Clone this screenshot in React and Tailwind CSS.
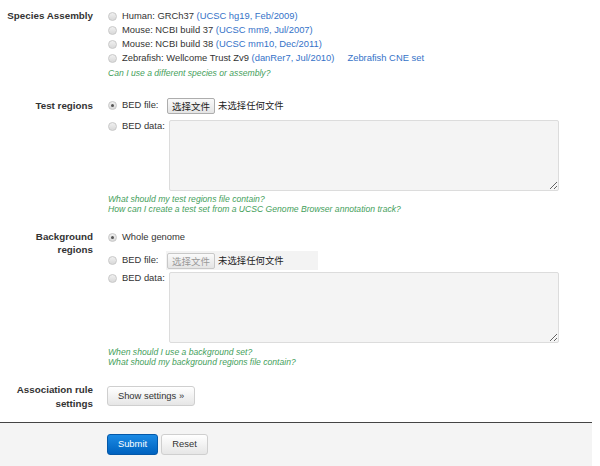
import React from 'react';

const Radio = ({ checked }) => (
  <span className="w-[9px] h-[9px] rounded-full border border-[#c8c8c8] bg-linear-to-b from-[#f0f0f0] to-[#d9d9d9] flex items-center justify-center shrink-0">
    {checked && <span className="w-[3px] h-[3px] rounded-full bg-[#555]" />}
  </span>
);

const Label = ({ children }) => (
  <div className="w-[93px] shrink-0 text-right font-bold text-[9.8px] text-[#333]">{children}</div>
);

const Link = ({ children }) => <span className="text-[#3572c8]">{children}</span>;

const Help = ({ children }) => (
  <div className="italic text-[8.6px] leading-[10px] text-[#45a05b]">{children}</div>
);

const FileInput = ({ disabled }) => (
  <div className={'flex items-center h-[19px] ' + (disabled ? 'bg-[#f3f3f3] w-[152px]' : '')}>
    <button
      type="button"
      className={
        'h-[16px] w-[48px] ml-[1px] border rounded-[2px] bg-linear-to-b from-[#fafafa] to-[#e4e4e4] text-[9.5px] leading-[14px] font-["Noto_Sans_CJK_SC",sans-serif] ' +
        (disabled ? 'border-[#c8c8c8] text-[#999]' : 'border-[#adadad] text-[#222]')
      }
    >
      选择文件
    </button>
    <span className="ml-[3px] text-[9.4px] text-[#222] font-['Noto_Sans_CJK_SC',sans-serif]">未选择任何文件</span>
  </div>
);

const BedData = () => (
  <div className="flex items-start">
    <div className="flex items-center gap-[5px] h-[13px]">
      <Radio />
      <span>BED data:</span>
    </div>
    <textarea className="ml-[4px] w-[390px] h-[71px] bg-[#f4f4f4] border border-[#dcdcdc] rounded-[2px] outline-none" />
  </div>
);

export default function App() {
  return (
    <div className="w-[600px] h-[466px] bg-white overflow-hidden font-['Liberation_Sans',Arial,sans-serif] text-[9.4px] text-[#333]">
      {/* species */}
      <div className="flex pt-[9px]">
        <Label>
          <div className="leading-[14px]">Species Assembly</div>
        </Label>
        <div className="ml-[15px] flex flex-col">
          <div className="h-[14px] flex items-center gap-[5px]">
            <Radio />
            <span>Human: GRCh37 <Link>(UCSC hg19, Feb/2009)</Link></span>
          </div>
          <div className="h-[14px] flex items-center gap-[5px]">
            <Radio />
            <span>Mouse: NCBI build 37 <Link>(UCSC mm9, Jul/2007)</Link></span>
          </div>
          <div className="h-[14px] flex items-center gap-[5px]">
            <Radio />
            <span>Mouse: NCBI build 38 <Link>(UCSC mm10, Dec/2011)</Link></span>
          </div>
          <div className="h-[14px] flex items-center gap-[5px]">
            <Radio />
            <span>Zebrafish: Wellcome Trust Zv9 <Link>(danRer7, Jul/2010)</Link></span>
            <span className="ml-[8px]"><Link>Zebrafish CNE set</Link></span>
          </div>
          <div className="mt-[3px]">
            <Help>Can I use a different species or assembly?</Help>
          </div>
        </div>
      </div>

      {/* test regions */}
      <div className="flex mt-[18px]">
        <Label>
          <div className="leading-[19px]">Test regions</div>
        </Label>
        <div className="ml-[15px] flex flex-col">
          <div className="flex items-center h-[19px]">
            <div className="flex items-center gap-[5px] w-[58px]">
              <Radio checked />
              <span>BED file:</span>
            </div>
            <FileInput />
          </div>
          <div className="mt-[5px]">
            <BedData />
          </div>
          <div className="mt-[3px]">
            <Help>What should my test regions file contain?</Help>
            <Help>How can I create a test set from a UCSC Genome Browser annotation track?</Help>
          </div>
        </div>
      </div>

      {/* background regions */}
      <div className="flex mt-[16px]">
        <Label>
          <div className="leading-[13px]">Background</div>
          <div className="leading-[13px]">regions</div>
        </Label>
        <div className="ml-[15px] flex flex-col">
          <div className="h-[14px] flex items-center gap-[5px]">
            <Radio checked />
            <span>Whole genome</span>
          </div>
          <div className="flex items-center h-[19px] mt-[7px]">
            <div className="flex items-center gap-[5px] w-[58px]">
              <Radio />
              <span>BED file:</span>
            </div>
            <FileInput disabled />
          </div>
          <div className="mt-[2px]">
            <BedData />
          </div>
          <div className="mt-[4px]">
            <Help>When should I use a background set?</Help>
            <Help>What should my background regions file contain?</Help>
          </div>
        </div>
      </div>

      {/* association rules */}
      <div className="flex mt-[16px]">
        <Label>
          <div className="leading-[14px]">Association rule</div>
          <div className="leading-[14px]">settings</div>
        </Label>
        <div className="ml-[14px] pt-[3px]">
          <button
            type="button"
            className="h-[20px] w-[88px] border border-[#cfcfcf] rounded-[3px] bg-linear-to-b from-white to-[#e6e6e6] text-[9.4px] text-[#333]"
          >
            Show settings »
          </button>
        </div>
      </div>

      {/* footer */}
      <div className="mt-[11px] w-[592px] h-[44px] border-t border-[#444] bg-[#f4f4f4] flex items-start pt-[11px] pl-[107px] gap-[3px]">
        <button
          type="button"
          className="h-[21px] w-[51px] rounded-[3px] border border-[#0458a8] bg-linear-to-b from-[#1a8ae4] to-[#0062bf] text-white text-[9.4px]"
        >
          Submit
        </button>
        <button
          type="button"
          className="h-[21px] w-[47px] rounded-[3px] border border-[#cfcfcf] bg-linear-to-b from-white to-[#e6e6e6] text-[#333] text-[9.4px]"
        >
          Reset
        </button>
      </div>
    </div>
  );
}
